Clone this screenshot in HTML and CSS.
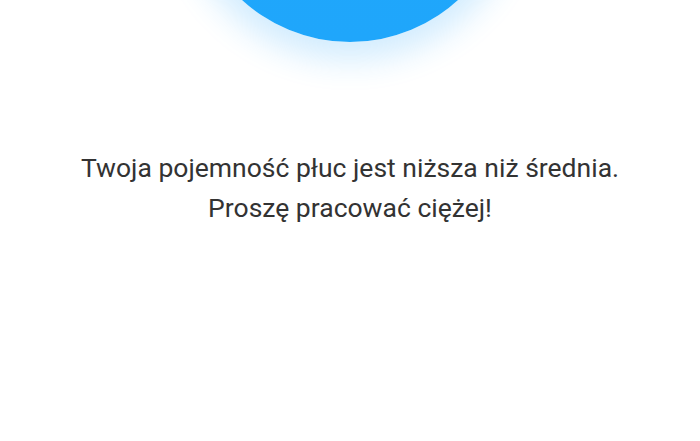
FILE: index.html
```html
<!DOCTYPE html>
<html lang="pl">
<head>
<meta charset="utf-8">
<link rel="stylesheet" href="styles.css">
</head>
<body>
<div class="page">
  <div class="circle"></div>
  <p class="message">Twoja pojemność płuc jest niższa niż średnia.<br>Proszę pracować ciężej!</p>
</div>
</body>
</html>
```
FILE: styles.css
```css
html, body {
  margin: 0;
  padding: 0;
  background: #ffffff;
}
.page {
  width: 700px;
  height: 441px;
  position: relative;
  overflow: hidden;
  display: flex;
  flex-direction: column;
  align-items: center;
}
.circle {
  position: absolute;
  left: 190px;
  top: -278px;
  width: 320px;
  height: 320px;
  border-radius: 50%;
  background: linear-gradient(180deg, #1fa9fc 0%, #1fa6fb 100%);
  box-shadow: 0 6px 32px 12px rgba(30, 160, 250, 0.2);
}
.message {
  margin: 148px 0 0 0;
  font-family: Roboto, "Noto Sans", sans-serif;
  font-size: 26.5px;
  line-height: 40px;
  color: #333333;
  text-align: center;
}
```
